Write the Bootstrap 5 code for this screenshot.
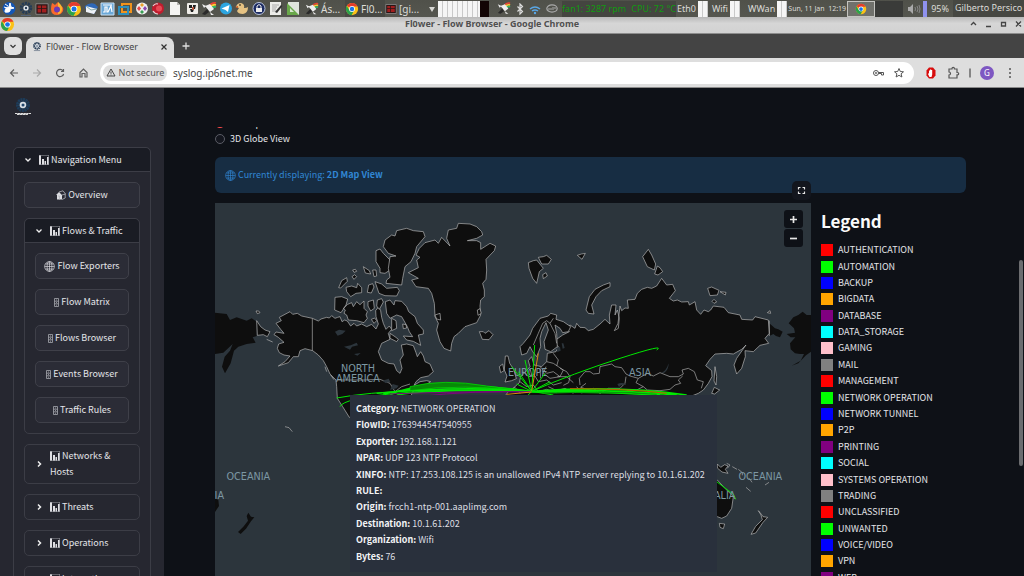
<!DOCTYPE html>
<html lang="en">
<head>
<meta charset="utf-8">
<meta name="viewport" content="width=device-width, initial-scale=1">
<title>Fl0wer - Flow Browser</title>
<link href="https://cdn.jsdelivr.net/npm/bootstrap@5.3.0/dist/css/bootstrap.min.css" rel="stylesheet">
<style>
  body { font: 9px/16px "Noto Sans CJK SC", "Open Sans", sans-serif; color: #e4e5e9; background: #0e1117; }
  button { font: inherit; color: inherit; }
  svg { display: block; flex: none; }
  .ui { font-family: "Noto Sans", sans-serif; }

  /* desktop panel */
  .panel { height: 17px; background: linear-gradient(#50514a, #55564f); color: #dcdcd8; font-size: 9px; line-height: 16px; white-space: nowrap; }
  .launchers { width: 300px; margin-left: 1px; }
  .task { width: 40px; gap: 2px; height: 17px; font-size: 10px; }
  .task.active { background: #484944; }
  .meter { height: 16px; background: repeating-linear-gradient(90deg, #f5f5f5 0 4px, #c9c9c9 4px 5px); }
  .meter-cpu { width: 51px; border-right: 9px solid #120404; }
  .meter-net { width: 10px; }
  .sensors { background: #444540; color: #109a10; width: 114px; }
  .netname { text-align: right; padding-right: 2px; }
  .clock { font-size: 7px; width: 60px; text-align: center; }
  .desk { width: 28px; height: 16px; background: #3a3b39; }
  .desk.on { background: #70716c; border: 1px solid #c4c4c0; }
  .owner { background: #464742; height: 17px; padding: 0 2px; width: 71px; text-align: right; }

  /* window frame */
  .titlebar { height: 16px; background: linear-gradient(#b9b9b9, #d6d6d6 40%, #d2d2d2); color: #505050; font-size: 9px; line-height: 13px; }
  .titlebar strong { padding: 0 15px 0 16px; }
  .tabstrip { height: 25px; background: #444; border-top: 1px solid #8d8d8d; }
  .tabsearch { width: 18px; height: 18px; background: #dfdfdf; border-radius: 6px; margin: 3px 4px 0 4px; }
  .page-tab { width: 148px; background: #dedede; border-radius: 8px 8px 0 0; margin-top: 3px; color: #444; font-size: 9px; padding: 0 6px; }
  .toolbar { height: 30px; background: #dedede; color: #555; border-bottom: 1px solid #8a8a8a; padding-right: 8px; }
  .urlbar { background: #fff; height: 22px; border-radius: 11px; padding-left: 3px; padding-right: 10px; }
  .insecure { background: #dedede; border-radius: 8px; height: 16px; width: 64px; font-size: 9px; line-height: 14px; gap: 3px; }
  .address { border: 0; outline: 0; background: none; color: #484848; font-size: 10px; padding: 0 6px; min-width: 0; }
  .profile { width: 14px; height: 14px; border-radius: 50%; background: #7e57c2; color: #fff; font-size: 8px; line-height: 14px; }

  /* sidebar */
  .side { width: 164px; background: #262730; padding: 8px 13px 0; }
  .side-logo { margin-bottom: 30px; }
  .group-box { border: 1px solid #3c3d46; border-radius: 5px; }
  .group-box > summary { display: flex; align-items: center; gap: 7px; padding: 3px 10px; min-height: 24px; list-style: none; }
  .group-box[open] > summary { background: #1a1c24; border-bottom: 1px solid #3c3d46; border-radius: 5px 5px 0 0; }
  .group-body { display: flex; flex-direction: column; gap: 10px; padding: 10px; }
  .nav-btn { height: 26px; border: 1px solid #3f4049; border-radius: 5px; background: #2b2c36; padding: 0; display: flex; align-items: center; justify-content: center; gap: 2px; white-space: nowrap; }
  .glyph { display: inline-block; vertical-align: -2px; }

  /* content */
  .content { padding: 39px 58px 0 51px; }
  .view-choice { margin-top: -12px; }
  .view-choice label { height: 16px; display: flex; align-items: center; gap: 5px; }
  .view-choice input { appearance: none; width: 10px; height: 10px; margin: 0; border: 1px solid #5b5d66; border-radius: 50%; background: #14161e; }
  .view-choice input:checked { border: 3px solid #ff4b4b; background: #fff; }
  .notice { background: #172d43; color: #3187d4; border-radius: 6px; padding: 10px; margin: 10px 0; gap: 2px; }
  .map-box { background: #2c353c; }
  .map-box > svg { position: absolute; inset: 0; width: 100%; height: 100%; }
  .land { fill: #0e0e0e; stroke: #b8b8b8; stroke-width: 2; stroke-linejoin: round; }
  .plain { fill: #0e0e0e; }
  .border-line { fill: none; stroke: #b0b0b0; stroke-width: 2; stroke-linejoin: round; }
  .lake { fill: #2c353c; }
  .flow { fill: none; stroke: #00e800; stroke-width: 3; }
  .place { fill: #7c97a3; font: 29px "DejaVu Sans", sans-serif; text-anchor: middle; }
  .full-btn { position: absolute; right: 0; top: -22px; width: 19px; height: 19px; border: 0; border-radius: 5px; background: #13161e; padding: 5px; }
  .zoomer { position: absolute; right: 8px; top: 7px; width: 19px; gap: 1px; }
  .zoomer button { height: 18px; border: 0; background: #0e1117; padding: 5px; border-radius: 3px; }
  .flow-tip { position: absolute; left: 135px; top: 192px; background: #29303c; padding: 6px 12px 7px 6px; white-space: nowrap; color: #dcdee2; }
  .flow-tip ul { display: grid; grid-auto-rows: 1fr; height: 164px; }
  .flow-tip b { color: #f3f4f6; }
  .legend-col { width: 155px; padding-left: 10px; }
  .legend-title { font-size: 17px; line-height: 24px; margin: 6px 0 9px; font-weight: 700; color: #fafafa; }
  .legend-list { display: grid; grid-auto-rows: 1fr; height: 344px; }
  .legend-list li { display: flex; align-items: center; gap: 5px; white-space: nowrap; }
  .swatch { width: 12px; height: 12px; }
  .thumb { position: absolute; right: 1px; top: 172px; width: 4px; height: 206px; border-radius: 2px; background: #6c6d70; }
</style>
</head>
<body class="vh-100 overflow-hidden d-flex flex-column">

<svg width="0" height="0" class="position-absolute" aria-hidden="true">
  <symbol id="chrome" viewBox="0 0 16 16"><circle cx="8" cy="8" r="7" fill="#fbc116"/><path d="M8 8 2 4.400A7 7 0 0 1 14.300 5H8z" fill="#e33b2e"/><path d="M2 4.400A7 7 0 0 0 7.500 15L10.500 9.500 8 8 5 9.500z" fill="#2ba24c"/><circle cx="8" cy="8" r="3.300" fill="#fff"/><circle cx="8" cy="8" r="2.500" fill="#1a73e8"/></symbol>
  <symbol id="gear" viewBox="0 0 16 16"><circle cx="8" cy="7" r="4.500" fill="none" stroke="#263c56" stroke-width="3.500" stroke-dasharray="2 .8"/><circle cx="8" cy="7" r="2.600" fill="#dfe6ee"/><circle cx="8" cy="7" r="1.200" fill="#263c56"/><path d="M3 14.500h10" stroke="#56657a"/></symbol>
  <symbol id="sat" viewBox="0 0 16 16"><path d="M8 5Q11 1 15 2" fill="none" stroke="#e43" stroke-width="1.800"/><path d="M9 6Q12 3 15 4" fill="none" stroke="#fc3" stroke-width="1.800"/><path d="M10 8Q12 5 15 6" fill="none" stroke="#3b6" stroke-width="1.800"/><path d="m4 5 5-2 4 5-4 3zM1 3l4 2-2 2zM9 11l4 3h-3z" fill="#eee"/><path d="m1 13 5-5 2 3-4 3z" fill="#2a2a2a"/></symbol>
  <symbol id="term" viewBox="0 0 16 16"><path d="M1 2h14v12H1z" fill="#2b1616" stroke="#8d8d8d"/><path d="M3 4h4v3H3zM8 4h5v3H8zM3 8h4v4H3zM8 8h5v4H8z" fill="#a11f1f"/></symbol>
  <symbol id="bars" viewBox="0 0 10 10"><path d="M0 0h2v10H0zM3 4h2v6H3zM5.500 6h1.500v4H5.500zM8 2h2v8H8z" fill="#dfdfe3"/><path d="M0 .5h10M0 9.500h10M9.500 0v10" stroke="#8a8b92" stroke-width=".6"/></symbol>
  <symbol id="globe" viewBox="0 0 12 12"><g fill="none" stroke="currentColor" stroke-width=".7"><circle cx="6" cy="6" r="5.300"/><ellipse cx="6" cy="6" rx="2.600" ry="5.300"/><path d="M6 .7v10.600M.7 6h10.600M1.500 3.300h9M1.500 8.700h9"/></g></symbol>
  <symbol id="house" viewBox="0 0 10 10"><path d="M0 5 3 2 6 5v4.500H1V5z" fill="#dadbe0"/><path d="M3 2 7 .8 9.500 4 6 5M9.200 4v4L6 9.500M2 6h1.500v3.500" fill="none" stroke="#b5b6bd" stroke-width=".8"/></symbol>
  <symbol id="cabinet" viewBox="0 0 5 9"><path d="M.5.5h4v8h-4zM.5 3.200h4M.5 5.800h4M2 2h1M2 4.500h1M2 7.200h1" fill="none" stroke="#a7a8af" stroke-width=".8"/></symbol>
  <symbol id="open" viewBox="0 0 8 8"><path d="M1.500 2.500 4 5l2.500-2.500" fill="none" stroke="#eee" stroke-width="1.300"/></symbol>
  <symbol id="shut" viewBox="0 0 8 8"><path d="M3 1.500 5.500 4 3 6.500" fill="none" stroke="#eee" stroke-width="1.500"/></symbol>
</svg>

<header class="panel ui d-flex align-items-center flex-shrink-0 position-relative">
  <div class="launchers d-flex justify-content-between align-items-center flex-shrink-0">
    <svg width="16" height="15" viewBox="0 0 16 15"><circle cx="8" cy="7.500" r="6.500" fill="#1557b5"/><path d="M4 11q0-5 4-5l1-4 1 4 3 1-4 1q1 4-5 3zM4 3l3 2M3 6l3 1" fill="#fff" stroke="#fff"/></svg>
    <svg width="16" height="16"><use href="#gear"/></svg>
    <svg width="14" height="14"><use href="#term"/></svg>
    <svg width="16" height="15" viewBox="0 0 16 15"><path d="M3 2q2 1 3 2 2-2 3-3 1 2 3 4 3 1 2 5-2 4-6 4-6 0-6-6 0-3 1-6z" fill="#f9692c"/><path d="M9 1q5 4 4 8-1 4-4 4z" fill="#fdb62f"/><circle cx="8" cy="8.500" r="3" fill="#6d3bb4"/></svg>
    <svg width="16" height="16"><use href="#chrome"/></svg>
    <svg width="16" height="15" viewBox="0 0 16 15"><path d="M2 5q5-4 10-2l3 3-4 7q-6-2-9-6z" fill="#2e68b8"/><path d="m3 5 11 3-3 5-8-2z" fill="#eef2f7"/><path d="m3 5 5 4 6-1" fill="none" stroke="#8aa"/></svg>
    <svg width="16" height="14" viewBox="0 0 16 14"><path d="M1 1h13v12H1z" fill="#6ca9d8" stroke="#c9e0f3"/><path d="M3 10h2V5h2v5h1l3-6 1 6M3 3h9" fill="none" stroke="#fff" stroke-width="1.200"/></svg>
    <svg width="16" height="14" viewBox="0 0 16 14"><path d="M5 2h9v8H5z" fill="none" stroke="#f0931c" stroke-width="2"/><path d="M2 5h9v7H2z" fill="none" stroke="#2d8fbd" stroke-width="2"/></svg>
    <svg width="16" height="15" viewBox="0 0 16 15"><circle cx="8" cy="7.500" r="6" fill="#eee"/><path d="m8 2 2 2-2 2-2-2z" fill="#e9a12c"/><path d="m8 9 2 2-2 2-2-2z" fill="#3a9f54"/><path d="m5 5 2 2.500-2 2.500-2-2.500z" fill="#e34949"/><path d="m11 5 2 2.500-2 2.500-2-2.500z" fill="#8d4bb1"/></svg>
    <svg width="16" height="15" viewBox="0 0 16 15"><circle cx="8" cy="7.500" r="6" fill="#c11c2d"/><path d="M3 5q2-3 5-2M3 10q2 3 5 3" fill="none" stroke="#ddd" stroke-width="1.200"/><circle cx="9" cy="7.500" r="3" fill="#e64b56"/></svg>
    <svg width="16" height="15" viewBox="0 0 16 15"><path d="M3 1h7l3 3v10H3z" fill="#f4f4f2"/><path d="M10 1v3h3z" fill="#b4b4b0"/></svg>
    <svg width="16" height="15" viewBox="0 0 16 15"><rect x="3" y="2" width="11" height="11" rx="1" fill="#efede8"/><path d="M5 4h3v3H5zM9 4h3l-1 4H9zM6 8h4l-1 3H7z" fill="#222"/><path d="M8 6h2v3H8z" fill="#b0543b"/></svg>
    <svg width="16" height="16"><use href="#sat"/></svg>
    <svg width="16" height="15" viewBox="0 0 16 15"><circle cx="8" cy="7.500" r="6" fill="#2ca5e0"/><path d="m3.500 7.500 8-3.500-1.500 7-2.500-2z" fill="#fff"/></svg>
    <svg width="16" height="15" viewBox="0 0 16 15"><path d="M2 6q1-4 5-4 4 1 3 5 3 0 4-1 0 6-5 7-5 0-6-3l2-3z" fill="#e6c383"/><path d="m1 6 3-1v2z" fill="#d05a20"/><circle cx="6" cy="4" r=".8"/></svg>
    <svg width="16" height="15" viewBox="0 0 16 15"><circle cx="8" cy="7.500" r="6" fill="#1c2b62" stroke="#b9c4dd"/><path d="M5 7h6v4H5z" fill="#eee"/><path d="M6 7V5q2-3 4 0v2" fill="none" stroke="#eee"/></svg>
    <svg width="16" height="15" viewBox="0 0 16 15"><path d="M2 1h11v13H2z" fill="#ecece9"/><path d="M4 4h7M4 6h5M4 8h4M4 10h5" stroke="#aaa"/><path d="m7 11 6-7 1.500 1L9 12z" fill="#333"/></svg>
    <svg width="16" height="15" viewBox="0 0 16 15"><path d="M3 1h11v13H3z" fill="#dfe4dc"/><path d="m2 2 12 12H2z" fill="#69a84a"/><path d="m5 7 4 4H5z" fill="#d9e7d2"/></svg>
  </div>
  <div class="d-flex align-items-center flex-shrink-0 ms-1">
    <div class="task d-flex align-items-center"><svg width="14" height="14"><use href="#sat"/></svg><span>Ás...</span></div>
    <div class="task active d-flex align-items-center"><svg width="14" height="14"><use href="#chrome"/></svg><span>Fl0...</span></div>
    <div class="task d-flex align-items-center"><svg width="12" height="12"><use href="#term"/></svg><span>[gi...</span></div>
    <svg width="13" height="10" viewBox="0 0 13 10"><path d="M4 3h6L7 8z" fill="#d6d6d2"/></svg>
    <div class="meter meter-cpu"></div>
    <div class="d-flex align-items-center justify-content-between ps-2 pe-1" style="width:73px">
      <svg width="14" height="15"><use href="#sat"/></svg>
      <svg width="8" height="12" viewBox="0 0 8 12"><path d="m1.500 3.500 5 5L4 11V1l2.500 2.500-5 5" fill="none" stroke="#ddd" stroke-width="1.200"/></svg>
      <svg width="12" height="12" viewBox="0 0 12 12"><path d="M1 6q5-4 10 0M3 8q3-2 6 0" fill="none" stroke="#5aa7e6" stroke-width="1.500"/><circle cx="6" cy="10" r="1.200" fill="#5aa7e6"/></svg>
      <svg width="12" height="9" viewBox="0 0 12 9"><ellipse cx="6" cy="4.500" rx="5.200" ry="3.600" fill="none" stroke="#aaa" stroke-width="1.200"/><path d="M3 4v2M5 4v2M7 3v3M9 3v2" stroke="#aaa"/></svg>
    </div>
    <div class="sensors d-flex justify-content-between"><span>fan1: 3287 rpm</span><span>CPU: 72 °C</span></div>
  </div>
  <div class="d-flex align-items-center flex-grow-1 justify-content-end">
    <span class="netname">Eth0</span><div class="meter meter-net me-1"></div>
    <span class="netname">Wifi</span><div class="meter meter-net me-2"></div>
    <span class="netname">WWan</span><div class="meter meter-net"></div>
    <span class="clock">Sun, 11 Jan &nbsp;12:19</span>
    <div class="desk on d-flex justify-content-center align-items-center"><svg width="12" height="12"><use href="#chrome"/></svg></div>
    <div class="desk me-1"></div>
    <svg width="14" height="12" viewBox="0 0 14 12"><path d="M1 4h2l3-3v10L3 8H1z" fill="#aaa"/><path d="M8 4q1 2 0 4M10 3q2 3 0 6M12 2q2 4 0 8" fill="none" stroke="#888"/></svg>
    <svg width="6" height="16" viewBox="0 0 6 16"><path d="M2 0h4v16H2z" fill="#8f92ee"/></svg>
    <span class="ps-1 pe-1">95%</span><span class="owner">Gilberto Persico</span>
  </div>
</header>

<div class="titlebar ui d-flex align-items-start flex-shrink-0">
  <svg width="15" height="15"><use href="#chrome"/></svg>
  <strong class="flex-grow-1 text-center">Fl0wer - Flow Browser - Google Chrome</strong>
  <svg width="56" height="12" viewBox="0 -2 56 12"><path d="m3 6 2.500-2.500L8 6M18 7.500h5M33.500 3.500h4v3.500h-4zM48 2.500l5 5M53 2.500l-5 5" fill="none" stroke="#444" stroke-width="1.300"/></svg>
</div>

<div class="tabstrip ui d-flex flex-shrink-0">
  <button class="tabsearch border-0 p-0 d-flex align-items-center justify-content-center" aria-label="Search tabs"><svg width="8" height="8" viewBox="0 0 8 8"><path d="m1.500 3 2.500 2.500L6.500 3" fill="none" stroke="#333" stroke-width="1.200"/></svg></button>
  <div class="page-tab d-flex align-items-start pt-1">
    <svg width="10" height="11" class="me-1"><use href="#gear"/></svg><span class="flex-grow-1 text-nowrap lh-sm">Fl0wer - Flow Browser</span>
    <svg width="8" height="12" viewBox="0 -2 8 12"><path d="m1.500 1.500 5 5M6.500 1.500l-5 5" stroke="#333" stroke-width="1.200"/></svg>
  </div>
  <svg width="24" height="24" viewBox="0 0 24 24"><path d="M12 8.500v7M8.500 12h7" stroke="#ddd" stroke-width="1.300"/></svg>
</div>

<div class="toolbar ui d-flex align-items-center flex-shrink-0">
  <svg width="100" height="22" viewBox="0 0 100 22" fill="none" stroke="#606060" stroke-width="1.200"><path d="M18 11h-7.500M14 7.500 10.500 11l3.500 3.500"/><path d="M33 11h7.500M37 7.500l3.500 3.500-3.500 3.500" stroke="#aaa"/><path d="M63 8.800A3.600 3.600 0 1 0 63.600 12M63.500 7v2.500H61"/><path d="M80 10.500 83.500 7l3.500 3.500V15h-2v-3.500h-3V15h-2z"/></svg>
  <div class="urlbar d-flex align-items-center flex-grow-1">
    <div class="insecure d-flex align-items-center justify-content-center"><svg width="10" height="9" viewBox="0 0 10 9"><path d="m5 1 4 7H1zM5 3.500v2.300M5 6.500v.8" fill="none" stroke="#444"/></svg><span>Not secure</span></div>
    <input class="address flex-grow-1" type="text" aria-label="Address" value="syslog.ip6net.me">
    <svg width="32" height="14" viewBox="0 0 32 14" fill="none" stroke="#555"><circle cx="4" cy="7" r="2.500"/><circle cx="4" cy="7" r=".6"/><path d="M6.500 6.500h5V9h-2V7.500h-3M27 2.500l1.300 3 3.200.3-2.400 2 .8 3.200-2.900-1.700-2.900 1.700.8-3.200-2.400-2 3.200-.3z"/></svg>
  </div>
  <div class="d-flex align-items-center ps-2">
    <svg width="50" height="16" viewBox="-1 0 50 16"><path d="m6 2.500 4-.1 2.500 3v5l-2.500 3H6l-2.500-3v-5z" fill="#d80d0d"/><path d="M6 8V5.500h1V4.500h1.200V5h1v4.500L8.500 12h-2L5 9z" fill="#fff"/><path d="M26 4h3v-.5a1.200 1.200 0 0 1 2.400 0V4H34v3.500h.5a1.200 1.200 0 0 1 0 2.400H34V13h-8v-3a1.500 1.500 0 0 0 0-3z" fill="none" stroke="#555" stroke-width="1.200"/><path d="M47 3.500v9" stroke="#555" stroke-width="1.300"/></svg>
    <span class="profile text-center ms-2">G</span>
    <svg width="14" height="14" viewBox="0 0 14 14" class="ms-2" fill="#555"><circle cx="8" cy="3" r="1"/><circle cx="8" cy="7" r="1"/><circle cx="8" cy="11" r="1"/></svg>
  </div>
</div>

<div class="d-flex flex-grow-1 overflow-hidden position-relative">
  <nav class="side flex-shrink-0 overflow-hidden" aria-label="Sidebar">
    <svg class="side-logo" width="20" height="21" viewBox="0 0 20 21"><circle cx="10" cy="9" r="5" fill="none" stroke="#1d3d5b" stroke-width="4" stroke-dasharray="1.800 .5"/><circle cx="10" cy="9" r="3.300" fill="#d7dfe6"/><circle cx="10" cy="9" r="1.500" fill="#20466b"/><path d="M2 17.500h16M4 18.500h11" stroke="#ddd" stroke-width="1.200" stroke-dasharray="2.500 .3"/></svg>
    <details class="group-box" open>
      <summary><svg width="8" height="8"><use href="#open"/></svg><span><svg class="glyph" width="10" height="10"><use href="#bars"/></svg> Navigation Menu</span></summary>
      <div class="group-body">
        <button class="nav-btn"><svg width="10" height="10"><use href="#house"/></svg>Overview</button>
        <details class="group-box" open>
          <summary><svg width="8" height="8"><use href="#open"/></svg><span class="text-nowrap"><svg class="glyph" width="10" height="10"><use href="#bars"/></svg> Flows &amp; Traffic</span></summary>
          <div class="group-body">
            <button class="nav-btn"><svg width="11" height="11"><use href="#globe"/></svg>Flow Exporters</button>
            <button class="nav-btn"><svg width="5" height="9"><use href="#cabinet"/></svg>Flow Matrix</button>
            <button class="nav-btn"><svg width="5" height="9"><use href="#cabinet"/></svg>Flows Browser</button>
            <button class="nav-btn"><svg width="5" height="9"><use href="#cabinet"/></svg>Events Browser</button>
            <button class="nav-btn"><svg width="5" height="9"><use href="#cabinet"/></svg>Traffic Rules</button>
          </div>
        </details>
        <details class="group-box"><summary><svg width="8" height="8"><use href="#shut"/></svg><span><svg class="glyph" width="10" height="10"><use href="#bars"/></svg> Networks &amp;<br>Hosts</span></summary></details>
        <details class="group-box"><summary><svg width="8" height="8"><use href="#shut"/></svg><span><svg class="glyph" width="10" height="10"><use href="#bars"/></svg> Threats</span></summary></details>
        <details class="group-box"><summary><svg width="8" height="8"><use href="#shut"/></svg><span><svg class="glyph" width="10" height="10"><use href="#bars"/></svg> Operations</span></summary></details>
        <details class="group-box"><summary><svg width="8" height="8"><use href="#shut"/></svg><span><svg class="glyph" width="10" height="10"><use href="#bars"/></svg> Integrations</span></summary></details>
      </div>
    </details>
  </nav>

  <main class="content flex-grow-1 d-flex flex-column">
    <div class="flex-shrink-0 overflow-hidden">
      <div class="view-choice">
        <label><input type="radio" name="view" checked>2D Map View</label>
        <label><input type="radio" name="view">3D Globe View</label>
      </div>
    </div>
    <div class="notice d-flex align-items-center flex-shrink-0"><svg width="11" height="11"><use href="#globe"/></svg><span>Currently displaying: <b>2D Map View</b></span></div>

    <div class="d-flex flex-grow-1">
      <div class="map-box flex-grow-1 position-relative">
        <svg viewBox="15 9 1788 1160" preserveAspectRatio="xMinYMin slice" role="img" aria-label="World map of network flows">
          <clipPath id="sheet"><path d="M15 9h1788v1160H15z"/></clipPath>
          <g clip-path="url(#sheet)">
          <!-- wrapped copies at both sides of the date line -->
          <path class="plain" d="M15 338 50 342 60 360 80 352 110 362 125 355 140 365 140 408 128 412 137 428 110 432 85 440 72 452 62 490 45 520 36 500 44 470 60 452 68 432 40 458 15 462z"/>
          <g transform="translate(1050 0)">
            <path class="plain" d="M753 345 740 345 728 335 715 345 700 352 686 370 702 385 705 398 680 402 692 412 706 412 690 430 692 448 705 460 720 462 732 462 722 482 695 497 715 490 738 466 753 455zM628 370 645 385 655 388 668 395 660 412 648 408 640 402 628 408z"/>
          </g>
          <!-- North America -->
          <path class="land" d="M240 335 248 343 262 340 275 348 307 355 325 363 333 357 350 352 358 354 365 347 375 355 383 352 390 350 396 365 404 360 412 363 422 378 432 370 440 378 455 372 470 380 485 373 498 387 505 372 498 350 497 332 506 320 512 332 515 352 520 370 528 388 538 378 545 388 535 400 540 418 515 430 505 455 515 480 535 490 552 492 560 512 570 520 576 505 570 480 580 465 574 435 590 432 610 437 618 458 622 470 632 455 640 468 645 485 660 492 670 515 655 528 632 533 618 545 612 556 630 545 650 542 662 545 640 560 615 566 605 580 600 660 418 652 398 620 382 595 380 560 378 540 360 522 350 500 340 482 325 465 308 452 285 446 270 452 265 470 250 470 235 488 205 498 225 485 240 468 222 465 208 458 202 445 206 432 222 427 205 412 192 404 198 396 222 400 212 388 198 370 214 362 208 352z"/>
          <path class="land" d="M140 362 152 380 165 390 180 395 172 410 160 404 142 406zM170 418l18 8"/>
          <path class="border-line" d="M307 355V452M380 540H460L510 538 540 550 555 575 575 560 600 552M345 500l5 15M362 525l10 14"/>
          <path class="lake" d="m375 395 12-6 20 3-10 10-14 5zM402 440l20-4 18-8 4 8-18 4-6 9zM432 462l20-3-10 8zM518 542l18-6 5 10-15 3zM540 570l8-18 18 5-6 8z"/>
          <!-- Arctic islands -->
          <path class="land" d="M375 292 395 290 413 297 408 315 393 338 374 330zM413 313 425 308 430 320 440 305 450 314 462 303 462 325 472 335 468 345 472 355 462 368 440 362 415 360 410 345 402 340 406 330 400 325zM386 263 395 242 410 233 412 244 392 264zM408 262 425 258 440 263 443 250 455 263 455 278 438 280 422 290 410 275zM426 230l8-6 6 6-8 8zM428 210l8-2 4 6-8 3zM460 200l18 12 4 10-16-3zM488 210l10 0 2 18-8 2zM476 255l12-4 4 10-8 18-12-2zM495 245 515 252 530 265 562 262 568 272 560 288 525 287 507 280zM474 305 490 300 493 325 482 333 474 318zM484 358l10-4 6 8-8 8zM138 333l8 0 4 5-8 3zM498 152 510 147 520 160 540 180 540 210 525 220 510 218 510 205 498 185z"/>
          <path class="land" d="M502 300 515 296 520 306 508 328 500 318zM526 305 540 300 552 315 555 302 575 304 590 320 596 335 615 350 622 370 640 390 640 402 625 405 632 436 610 424 590 420 580 408 608 410 598 395 592 380 575 350 560 345 540 355 530 340zM545 355 558 362 560 385 545 392zM540 400 555 410 565 418 560 425 540 415zM578 372l10 2 2 10-10 2z"/>
          <path class="land" d="M525 120 545 105 555 108 560 92 590 85 610 92 640 95 645 110 620 140 615 160 603 185 585 200 578 235 575 255 528 250 530 240 540 232 535 205 540 170 558 168 535 160 520 140z"/>
          <g transform="translate(510 0)">
            <!-- Greenland and Iceland -->
            <path class="land" d="M85 218 115 203 110 180 120 172 108 165 118 145 135 128 165 120 175 130 185 112 210 138 200 115 205 90 230 85 235 70 270 72 290 80 305 95 308 105 290 115 262 122 290 122 302 128 302 148 330 130 347 138 343 152 318 178 320 210 318 238 308 250 313 270 313 290 302 300 300 318 302 345 290 368 255 380 235 400 222 410 215 430 212 453 192 445 180 425 175 408 170 390 175 370 165 350 163 310 155 280 145 265 108 260 95 240 115 235z"/>
            <path class="land" d="M165 345l15-5 2 20-12-3zM292 330l8-4 4 14-10 6zM298 395l12 0 5 5 12-8 12 12-12 15-20-1z"/>
            <!-- Svalbard -->
            <path class="land" d="M445 188 460 182 470 180 490 205 478 215 470 250 458 235 447 205zM475 172 490 170 500 166 514 178 505 192 485 192zM488 224l10-6 4 10-12 8z"/>
            <!-- British Isles -->
            <path class="land" d="M376 468l8 0 5 22 12 18 8 28-14 6-20 4 6-18-8-18zM358 500l10-8 4 20-10 6z"/>
            <!-- Eurasia -->
            <path class="land" d="M570 375 585 385 590 370 600 382 615 383 625 392 640 388 660 372 675 358 690 372 688 345 695 315 708 315 705 345 712 330 718 355 715 385 703 392 714 370 720 318 725 332 735 324 745 325 742 300 765 298 772 280 785 268 802 262 815 265 830 258 845 235 860 255 878 253 886 272 868 295 880 303 892 300 905 306 925 305 928 315 945 305 950 330 962 343 972 330 985 335 992 330 1000 318 1032 322 1045 338 1080 345 1085 358 1118 360 1125 350 1165 360 1168 400 1155 415 1166 430 1140 436 1120 455 1095 452 1096 470 1085 505 1070 522 1062 495 1070 475 1098 435 1085 448 1060 462 1040 460 1005 462 990 478 977 497 995 512 996 530 985 550 970 570 955 580 930 590 930 640 385 640 370 595 385 575 405 560 418 548 422 530 440 512 450 500 445 482 455 470 462 495 485 500 500 485 502 460 528 455 535 440 520 425 548 405 568 395 560 385z"/>
            <path class="land" d="M420 440 430 430 450 405 458 385 480 355 505 348 512 340 530 345 528 358 550 365 572 380 565 395 548 398 540 385 525 375 530 400 532 440 512 455 495 448 492 425 505 390 498 368 485 395 480 415 482 440 470 470 458 455 450 440 440 460 425 465z"/>
          </g>
          <g transform="translate(1050 0)">
            <path class="land" d="M78 330 88 290 105 268 130 255 150 248 150 260 125 272 108 290 95 315 102 342 85 340zM248 170 265 148 275 165 287 192 283 210 262 200zM284 222l8-24 8 5 8 12-14 10zM443 265l12-4 22 10-5 14-22 2zM480 275l18 2-2 8zM456 304l6-6 8 8-8 4zM52 166l12-4 12-2-10 18zM622 338l8-6 2 8zM465 500l5 30-2 25-6-12zM455 580l8-18 16 8-15 12z"/>
            <path class="border-line" d="M628 362V408M0 505 20 515 30 530 26 548 10 556M60 555 58 535 75 515 90 515 100 522 118 520 120 500 155 492 165 500 185 503 198 522 210 528 235 535 262 520 280 528 300 518 330 530 355 530 370 522 366 510 385 505 403 515 412 540 430 545 424 565M235 535 228 548 250 560 262 570 300 572 330 568 345 555 362 550 355 540 368 528M198 530 195 550 180 565 145 565 120 580 100 565 60 575M78 550 62 562 88 570M250 560 230 570 200 570M-60 500-40 520-20 515 0 530M-35 560-10 572 15 565 40 580M50 560l15 20"/>
            <path class="lake" d="M303 518q15-2 23-28 0 20-14 29zM5 430l5 0 4 14-6 2zM-10 445l10-5 2 12-10 4zM172 552q12-5 25-1v4q-14-3-20 6z"/>
          </g>
          <path class="border-line" d="M970 435 985 400 998 370 1010 362 1020 370 1030 355M1020 370 1035 400 1040 430M1010 485 1030 490 1045 500 1060 510 1050 530 1020 535 1000 520 1008 500M940 515 955 530 975 528 985 545 1010 540 1030 555 1055 548M930 545 950 560 970 555 985 575 1010 568 1040 578M1030 460 1045 480 1040 498M900 575 915 562 930 580M960 505 965 525M990 505 992 535M1042 530 1070 530 1090 548"/>
          <!-- Pacific side -->
          <path class="plain" d="m115 938 8 12 10 2-10 12-15 22-16 16-8-6 16-16 14-18-4-14zM15 895l10 5 2 18-12 18z"/>
          <path class="border-line" d="m225 680 12 3 10 12"/>
          <g transform="translate(1470 540)">
            <path class="land" d="M0 280 52 300 75 325 100 350 95 385 80 408 65 415 52 410 0 405zM58 430l16 2-4 14-10-4zM175 392l10 12 4 6 14 2-14 15-22 32-14 4 14-24 20-20-4-14zM52 252l10 10 12-8 10 4-8 10 8 12-18-4-14-12z"/>
            <path class="border-line" d="m80 250 10 5-8 10M97 260l14 8M115 268l12 10v8M148 295l8 12M138 322l14 12M195 315l12-8"/>
            <path class="flow" d="m50 305 50 38 7 15"/>
          </g>
          <!-- place names -->
          <g class="place">
            <text x="444" y="515">NORTH</text><text x="444" y="547">AMERICA</text>
            <text x="953" y="528">EUROPE</text><text x="1290" y="528">ASIA</text>
            <text x="115" y="840">OCEANIA</text><text x="1651" y="840">OCEANIA</text>
            <text x="28" y="896">IA</text><text x="1544" y="896">ALIA</text>
          </g>
          <!-- traffic flows, all meeting in central Europe -->
          <g class="flow">
            <path d="M380 594Q560 560 965 574Q1000 574 962 576"/><path d="M390 620Q400 595 560 580T965 574"/>
            <path d="M540 585Q640 530 965 574M520 582Q700 540 965 574M500 580Q760 556 965 574M560 585Q700 565 965 574" stroke-width="4"/>
            <path d="M600 560Q700 535 830 558L965 574Q750 550 600 572z" fill="#078a07" stroke-width="2"/>
            <path d="M540 582Q700 575 965 575" stroke="#7c087c"/><path d="M620 590Q800 570 965 577" stroke="#7c087c"/>
            <path d="M965 574Q970 500 974 435M965 574 925 515M965 574 945 480M965 574 905 500M965 574 1005 520M965 574 1020 545M965 574 920 552M965 574 1030 585M965 574 950 590"/>
            <path d="M965 574 985 460M890 583 965 576" stroke="#d98a10"/>
            <path d="M965 574Q1090 520 1230 475T1340 450"/>
            <path d="M965 574Q1230 555 1430 585M965 574Q1200 566 1400 585M965 576Q1200 575 1350 586" stroke-width="5"/>
            <path d="M1080 566Q1260 566 1370 580" stroke="#c05a00"/>
            <path d="M1000 580Q1200 572 1340 583" stroke="#0a9a0a"/>
          </g>
          </g>
        </svg>
        <button class="full-btn" aria-label="Fullscreen"><svg width="9" height="9" viewBox="0 0 9 9"><path d="M1.500 3.500v-2h2M5.500 1.500h2v2M7.500 5.500v2h-2M3.500 7.500h-2v-2" fill="none" stroke="#e6e6e6" stroke-width="1.200"/></svg></button>
        <div class="zoomer d-flex flex-column">
          <button aria-label="Zoom in"><svg width="9" height="9" viewBox="0 0 9 9"><path d="M4.500 1v7M1 4.500h7" stroke="#e6e6e6" stroke-width="1.700"/></svg></button>
          <button aria-label="Zoom out"><svg width="9" height="9" viewBox="0 0 9 9"><path d="M1 4.500h7" stroke="#e6e6e6" stroke-width="1.700"/></svg></button>
        </div>
        <div class="flow-tip" role="tooltip">
          <ul class="list-unstyled m-0">
            <li><b>Category:</b> NETWORK OPERATION</li>
            <li><b>FlowID:</b> 1763944547540955</li>
            <li><b>Exporter:</b> 192.168.1.121</li>
            <li><b>NPAR:</b> UDP 123 NTP Protocol</li>
            <li><b>XINFO:</b> NTP: 17.253.108.125 is an unallowed IPv4 NTP server replying to 10.1.61.202</li>
            <li><b>RULE:</b></li>
            <li><b>Origin:</b> frcch1-ntp-001.aaplimg.com</li>
            <li><b>Destination:</b> 10.1.61.202</li>
            <li><b>Organization:</b> Wifi</li>
            <li><b>Bytes:</b> 76</li>
          </ul>
        </div>
      </div>
      <section class="legend-col flex-shrink-0">
        <h2 class="legend-title">Legend</h2>
        <ul class="legend-list list-unstyled m-0">
          <li><span class="swatch" style="background:red"></span>AUTHENTICATION</li>
          <li><span class="swatch" style="background:lime"></span>AUTOMATION</li>
          <li><span class="swatch" style="background:blue"></span>BACKUP</li>
          <li><span class="swatch" style="background:orange"></span>BIGDATA</li>
          <li><span class="swatch" style="background:purple"></span>DATABASE</li>
          <li><span class="swatch" style="background:cyan"></span>DATA_STORAGE</li>
          <li><span class="swatch" style="background:pink"></span>GAMING</li>
          <li><span class="swatch" style="background:gray"></span>MAIL</li>
          <li><span class="swatch" style="background:red"></span>MANAGEMENT</li>
          <li><span class="swatch" style="background:lime"></span>NETWORK OPERATION</li>
          <li><span class="swatch" style="background:blue"></span>NETWORK TUNNEL</li>
          <li><span class="swatch" style="background:orange"></span>P2P</li>
          <li><span class="swatch" style="background:purple"></span>PRINTING</li>
          <li><span class="swatch" style="background:cyan"></span>SOCIAL</li>
          <li><span class="swatch" style="background:pink"></span>SYSTEMS OPERATION</li>
          <li><span class="swatch" style="background:gray"></span>TRADING</li>
          <li><span class="swatch" style="background:red"></span>UNCLASSIFIED</li>
          <li><span class="swatch" style="background:lime"></span>UNWANTED</li>
          <li><span class="swatch" style="background:blue"></span>VOICE/VIDEO</li>
          <li><span class="swatch" style="background:orange"></span>VPN</li>
          <li><span class="swatch" style="background:purple"></span>WEB</li>
        </ul>
      </section>
    </div>
  </main>
  <div class="thumb"></div>
</div>
<script src="https://cdn.jsdelivr.net/npm/bootstrap@5.3.0/dist/js/bootstrap.bundle.min.js"></script>
</body>
</html>
